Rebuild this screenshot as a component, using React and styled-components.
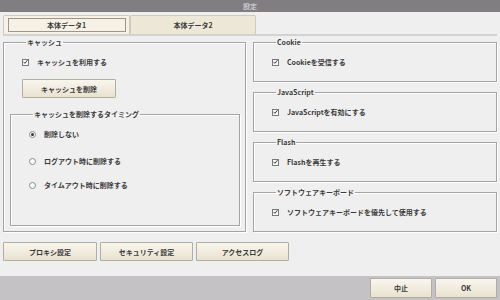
import React from "react";
import styled, { createGlobalStyle } from "styled-components";

const GlobalStyle = createGlobalStyle`
  html, body {
    margin: 0;
    padding: 0;
    background: #efefef;
  }
  * {
    box-sizing: border-box;
  }
`;

const Window = styled.div`
  width: 500px;
  height: 300px;
  display: flex;
  flex-direction: column;
  background: #efefef;
  font-family: "Noto Sans CJK JP", "Liberation Sans", sans-serif;
  font-size: 7px;
  font-weight: 700;
  color: #3a3a3a;
  overflow: hidden;
`;

const TitleBar = styled.div`
  height: 12px;
  background: #807e80;
  color: #e4e4e4;
  font-size: 7px;
  line-height: 12px;
  text-align: center;
  font-weight: 400;
`;

const Body = styled.div`
  flex: 1;
  padding: 3px 3px 0 3px;
  display: flex;
  flex-direction: column;
`;

const TabBar = styled.div`
  height: 21px;
  display: flex;
  border-bottom: 2px solid #d2d2d2;
  padding-left: 0;
`;

const Tab = styled.div`
  width: ${(props) => (props.active ? "127px" : "126px")};
  height: 19px;
  display: flex;
  align-items: center;
  justify-content: center;
  background: ${(props) => (props.active ? "#f6f1e4" : "#ede7d7")};
  border: 1px solid #cfcabd;
  border-bottom: none;
  border-radius: 2px 2px 0 0;
  position: relative;
  &::after {
    content: "";
    display: ${(props) => (props.active ? "block" : "none")};
    position: absolute;
    left: 4px;
    right: 3px;
    top: 2px;
    bottom: 2px;
    border: 1px solid #9a968c;
  }
`;

const Main = styled.div`
  margin-top: 2px;
  display: grid;
  grid-template-columns: 243px 244px;
  column-gap: 7px;
`;

const Group = styled.fieldset`
  margin: 0;
  padding: 0 0 0 ${(props) => props.indent || 18}px;
  border: 1px solid #a4a4a4;
  box-shadow: inset 1px 1px 0 #ffffff, 1px 1px 0 #ffffff;
  min-width: 0;
  height: ${(props) => props.h}px;
  display: flex;
  flex-direction: column;
  align-items: flex-start;
`;

const Legend = styled.legend`
  margin-left: 4px;
  padding: 0 1px;
  line-height: 9px;
  height: 9px;
  font-size: 7px;
  color: #3a3a3a;
`;

const RightColumn = styled.div`
  display: flex;
  flex-direction: column;
  gap: 6px;
`;

const OptionRow = styled.div`
  display: flex;
  align-items: center;
  height: 10px;
  gap: 8px;
  margin-top: ${(props) => props.mt || 0}px;
`;

const Box = styled.span`
  width: 7px;
  height: 7px;
  border: 1px solid #7a7a7a;
  background: #fbfbfb;
  display: flex;
  align-items: center;
  justify-content: center;
`;

const Radio = styled.span`
  width: 7px;
  height: 7px;
  border-radius: 50%;
  border: 1px solid #8a8a8a;
  background: #fbfbfb;
  display: flex;
  align-items: center;
  justify-content: center;
  &::after {
    content: "";
    display: ${(props) => (props.checked ? "block" : "none")};
    width: 3px;
    height: 3px;
    border-radius: 50%;
    background: #333;
  }
`;

const Button = styled.button`
  width: ${(props) => props.w}px;
  height: ${(props) => props.h || 19}px;
  margin: 0;
  padding: 0;
  border: 1px solid #b2ada2;
  border-radius: 1px;
  background: linear-gradient(#f9f6ee, #e9e2cf);
  font-family: inherit;
  font-size: 7px;
  font-weight: 700;
  color: #3a3a3a;
  display: flex;
  align-items: center;
  justify-content: center;
`;

const CacheButton = styled(Button)`
  margin-top: 12px;
`;

const TimingGroup = styled(Group)`
  margin: 12px 0 0 -12px;
  width: 230px;
`;

const ToolRow = styled.div`
  margin-top: 10px;
  display: flex;
  gap: 3px;
`;

const Footer = styled.div`
  margin-top: 15px;
  height: 25px;
  background: #c4c2c4;
  display: flex;
  justify-content: flex-end;
  align-items: center;
  gap: 3px;
  padding: 0 3px 0 0;
`;

const Check = () => (
  <Box>
    <svg width="6" height="6" viewBox="0 0 6 6">
      <path d="M0.6 2.8 L2.3 4.6 L5.4 0.8" fill="none" stroke="#2a2a2a" strokeWidth="1.1" />
    </svg>
  </Box>
);

const CheckOption = ({ label, mt }) => (
  <OptionRow mt={mt}>
    <Check />
    <span>{label}</span>
  </OptionRow>
);

const RadioOption = ({ label, checked, mt }) => (
  <OptionRow mt={mt}>
    <Radio checked={checked} />
    <span>{label}</span>
  </OptionRow>
);

const rightGroups = [
  { title: "Cookie", label: "Cookieを受信する" },
  { title: "JavaScript", label: "JavaScriptを有効にする" },
  { title: "Flash", label: "Flashを再生する" },
  { title: "ソフトウェアキーボード", label: "ソフトウェアキーボードを優先して使用する" },
];

const App = () => (
  <Window>
    <GlobalStyle />
    <TitleBar>設定</TitleBar>
    <Body>
      <TabBar>
        <Tab active>本体データ1</Tab>
        <Tab>本体データ2</Tab>
      </TabBar>
      <Main>
        <Group h={194}>
          <Legend>キャッシュ</Legend>
          <CheckOption label="キャッシュを利用する" mt={10} />
          <CacheButton w={94}>キャッシュを削除</CacheButton>
          <TimingGroup h={116}>
            <Legend>キャッシュを削除するタイミング</Legend>
            <RadioOption label="削除しない" checked mt={10} />
            <RadioOption label="ログアウト時に削除する" mt={17} />
            <RadioOption label="タイムアウト時に削除する" mt={14} />
          </TimingGroup>
        </Group>
        <RightColumn>
          {rightGroups.map((g) => (
            <Group key={g.title} h={44}>
              <Legend>{g.title}</Legend>
              <CheckOption label={g.label} mt={10} />
            </Group>
          ))}
        </RightColumn>
      </Main>
      <ToolRow>
        <Button w={94}>プロキシ設定</Button>
        <Button w={93}>セキュリティ設定</Button>
        <Button w={93}>アクセスログ</Button>
      </ToolRow>
    </Body>
    <Footer>
      <Button w={62} h={20}>中止</Button>
      <Button w={62} h={20}>OK</Button>
    </Footer>
  </Window>
);

export default App;
